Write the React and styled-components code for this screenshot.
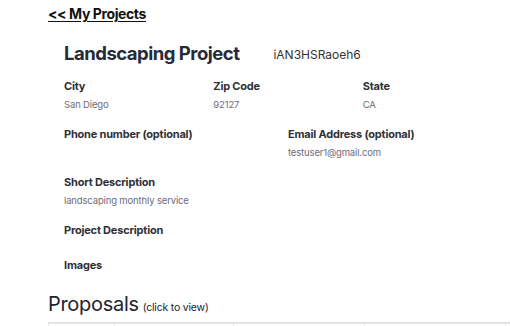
import React from "react";
import styled, { createGlobalStyle } from "styled-components";

const Global = createGlobalStyle`
  html, body { margin: 0; padding: 0; background: #fff; }
  body { font-family: Inter, "Noto Sans", sans-serif; }
`;

const Page = styled.div`
  padding: 5px 0 0 48px;
  display: flex;
  flex-direction: column;
`;

const BackLink = styled.a`
  font-size: 14px;
  font-weight: 700;
  color: #111;
  text-decoration: underline;
  text-underline-offset: 2px;
  letter-spacing: -0.4px;
  line-height: 17px;
  align-self: flex-start;
`;

const Details = styled.div`
  padding: 14px 0 0 16px;
  width: 448px;
  display: flex;
  flex-direction: column;
`;

const TitleRow = styled.div`
  display: flex;
  align-items: center;
  gap: 34px;
  height: 34px;
`;

const Title = styled.h1`
  margin: 0;
  font-size: 18.5px;
  font-weight: 700;
  color: #262a3b;
  letter-spacing: -0.5px;
`;

const Code = styled.span`
  font-size: 12px;
  color: #333;
  padding-top: 3px;
`;

const Grid = styled.div`
  display: grid;
  grid-template-columns: repeat(${(p) => p.$cols}, 1fr);
  margin-top: ${(p) => p.$top}px;
`;

const Field = styled.div`
  display: flex;
  flex-direction: column;
  gap: 5px;
`;

const Label = styled.div`
  font-size: 11px;
  font-weight: 700;
  color: #2f3037;
  letter-spacing: -0.2px;
  line-height: 14px;
`;

const Value = styled.div`
  font-size: 9.5px;
  color: #6e6c78;
  line-height: 13px;
  min-height: 13px;
  letter-spacing: -0.15px;
`;

const Block = styled.div`
  margin-top: ${(p) => p.$top}px;
  display: flex;
  flex-direction: column;
  gap: 5px;
`;

const ProposalsHead = styled.div`
  margin-top: 20px;
  display: flex;
  align-items: baseline;
  gap: 4px;
`;

const ProposalsTitle = styled.span`
  font-size: 20px;
  color: #23232b;
  letter-spacing: -0.3px;
`;

const Hint = styled.span`
  font-size: 10.5px;
  color: #23232b;
  letter-spacing: -0.2px;
`;

const Table = styled.div`
  margin-top: 6px;
  display: grid;
  grid-template-columns: 66px 119px 131px 141px;
  border-top: 2px solid #e4e4e6;
  border-left: 1px solid #e4e4e6;
  height: 12px;
`;

const Cell = styled.div`
  border-right: 1px solid #e8e9ee;
`;

export default function App() {
  return (
    <>
      <Global />
      <Page>
        <BackLink href="#">&lt;&lt; My Projects</BackLink>
        <Details>
          <TitleRow>
            <Title>Landscaping Project</Title>
            <Code>iAN3HSRaoeh6</Code>
          </TitleRow>
          <Grid $cols={3} $top={9}>
            <Field>
              <Label>City</Label>
              <Value>San Diego</Value>
            </Field>
            <Field>
              <Label>Zip Code</Label>
              <Value>92127</Value>
            </Field>
            <Field>
              <Label>State</Label>
              <Value>CA</Value>
            </Field>
          </Grid>
          <Grid $cols={2} $top={16}>
            <Field>
              <Label>Phone number (optional)</Label>
              <Value></Value>
            </Field>
            <Field>
              <Label>Email Address (optional)</Label>
              <Value>testuser1@gmail.com</Value>
            </Field>
          </Grid>
          <Block $top={16}>
            <Label>Short Description</Label>
            <Value>landscaping monthly service</Value>
          </Block>
          <Block $top={16}>
            <Label>Project Description</Label>
          </Block>
          <Block $top={21}>
            <Label>Images</Label>
          </Block>
        </Details>
        <ProposalsHead>
          <ProposalsTitle>Proposals</ProposalsTitle>
          <Hint>(click to view)</Hint>
        </ProposalsHead>
        <Table>
          <Cell />
          <Cell />
          <Cell />
          <Cell />
        </Table>
      </Page>
    </>
  );
}
